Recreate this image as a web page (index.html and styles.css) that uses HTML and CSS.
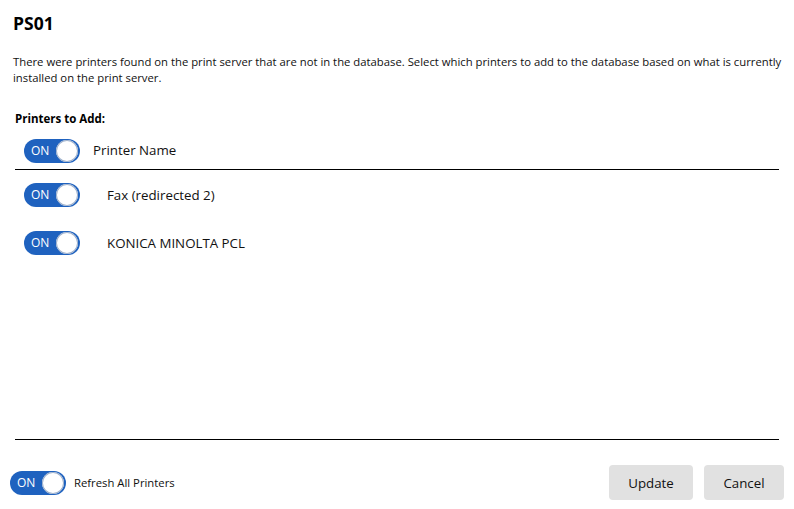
FILE: index.html
```html
<!DOCTYPE html>
<html>
<head>
<meta charset="utf-8">
<link rel="stylesheet" href="styles.css">
</head>
<body>
<div class="dialog">
  <h1 class="title">PS01</h1>
  <p class="desc">There were printers found on the print server that are not in the database. Select which printers to add to the database based on what is currently installed on the print server.</p>
  <div class="section-label">Printers to Add:</div>
  <div class="header-row">
    <span class="toggle"><span class="toggle-text">ON</span><span class="knob"></span></span>
    <span class="header-name">Printer Name</span>
  </div>
  <div class="list">
    <div class="row">
      <span class="toggle"><span class="toggle-text">ON</span><span class="knob"></span></span>
      <span class="row-name">Fax (redirected 2)</span>
    </div>
    <div class="row">
      <span class="toggle"><span class="toggle-text">ON</span><span class="knob"></span></span>
      <span class="row-name">KONICA MINOLTA PCL</span>
    </div>
  </div>
  <div class="footer">
    <div class="refresh">
      <span class="toggle"><span class="toggle-text">ON</span><span class="knob"></span></span>
      <span class="refresh-label">Refresh All Printers</span>
    </div>
    <div class="buttons">
      <button class="btn btn-update">Update</button>
      <button class="btn btn-cancel">Cancel</button>
    </div>
  </div>
</div>
</body>
</html>
```
FILE: styles.css
```css
* { box-sizing: border-box; }
html, body {
  margin: 0;
  padding: 0;
  background: #ffffff;
}
body {
  font-family: "Open Sans", "Noto Sans", "DejaVu Sans", sans-serif;
  color: #000000;
  width: 794px;
  height: 509px;
  overflow: hidden;
}
.dialog {
  display: flex;
  flex-direction: column;
  height: 509px;
}
.title {
  margin: 12px 0 0 13px;
  font-size: 17.5px;
  font-weight: 700;
  line-height: 22px;
}
.desc {
  margin: 20px 12px 0 13px;
  font-size: 11.3px;
  line-height: 16px;
  color: #111;
}
.section-label {
  margin: 25px 0 0 15px;
  font-size: 11.5px;
  font-weight: 700;
  line-height: 16px;
}
.toggle {
  display: inline-flex;
  align-items: center;
  justify-content: space-between;
  width: 56px;
  height: 24px;
  border-radius: 12px;
  background: #1f62bf;
  padding: 0 2px 0 7px;
  flex-shrink: 0;
}
.toggle-text {
  color: #ffffff;
  font-size: 12px;
  line-height: 1;
}
.knob {
  width: 22px;
  height: 22px;
  border-radius: 50%;
  background: #ffffff;
  box-shadow: 0 0 0 1px #9db0cc inset;
}
.header-row {
  display: flex;
  align-items: center;
  gap: 13px;
  margin: 11px 15px 0 15px;
  padding: 0 0 5px 9px;
  border-bottom: 1.5px solid #000;
  height: 32px;
}
.header-name {
  font-size: 13.3px;
  color: #111;
  margin-top: -3px;
}
.row-name {
  font-size: 13.3px;
  color: #111;
}
.list {
  flex: 1;
  margin: 0 15px;
  padding-top: 13px;
  display: flex;
  flex-direction: column;
  gap: 24px;
  border-bottom: 1.5px solid #000;
  margin-bottom: 25px;
}
.row {
  display: flex;
  align-items: center;
  gap: 27px;
  padding-left: 9px;
}
.footer {
  display: flex;
  justify-content: space-between;
  align-items: center;
  padding: 0 10px 9px 10px;
}
.refresh {
  display: flex;
  align-items: center;
  gap: 8px;
}
.refresh-label {
  font-size: 11.3px;
  color: #111;
}
.buttons {
  display: flex;
  gap: 11px;
}
.btn {
  font-family: "Open Sans", "Noto Sans", sans-serif;
  font-size: 13.3px;
  color: #111;
  background: #e1e1e1;
  border: none;
  border-radius: 4px;
  height: 35px;
  cursor: pointer;
}
.btn-update { width: 84px; }
.btn-cancel { width: 80px; }
```
